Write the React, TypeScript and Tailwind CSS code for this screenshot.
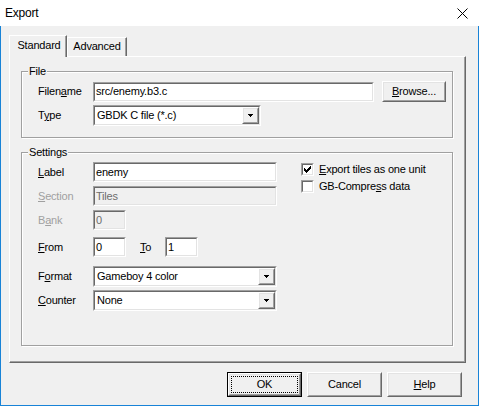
import type { ReactNode } from "react";

// Classic Win32 3D edges
const SUNKEN_OUT = "border border-t-[#a0a0a0] border-l-[#a0a0a0] border-b-white border-r-white";
const SUNKEN_IN = "border border-t-[#696969] border-l-[#696969] border-b-[#e3e3e3] border-r-[#e3e3e3]";
const RAISED_OUT = "border border-t-white border-l-white border-b-[#696969] border-r-[#696969]";
const RAISED_IN = "border border-t-[#e3e3e3] border-l-[#e3e3e3] border-b-[#a0a0a0] border-r-[#a0a0a0]";

function Edit({ value, width, disabled }: { value: string; width: string; disabled?: boolean }) {
  return (
    <div className={`${SUNKEN_OUT} ${width} h-[20px]`}>
      <div
        className={`${SUNKEN_IN} h-full flex items-center pl-[1px] ${
          disabled ? "bg-[#f0f0f0] text-[#6d6d6d]" : "bg-white"
        }`}
      >
        {value}
      </div>
    </div>
  );
}

function Arrow() {
  return (
    <svg width="5" height="3" viewBox="0 0 5 3" shapeRendering="crispEdges">
      <rect x="0" y="0" width="5" height="1" fill="#000" />
      <rect x="1" y="1" width="3" height="1" fill="#000" />
      <rect x="2" y="2" width="1" height="1" fill="#000" />
    </svg>
  );
}

function Combo({ value, width }: { value: string; width: string }) {
  return (
    <div className={`${SUNKEN_OUT} ${width} h-[21px]`}>
      <div className={`${SUNKEN_IN} h-full flex items-stretch bg-white`}>
        <div className="flex-1 flex items-center pl-[2px]">{value}</div>
        <div className={`${RAISED_OUT} w-[17px] bg-[#f0f0f0]`}>
          <div className={`${RAISED_IN} h-full flex items-center justify-center`}>
            <Arrow />
          </div>
        </div>
      </div>
    </div>
  );
}

function Button({ children, width, isDefault }: { children: ReactNode; width: string; isDefault?: boolean }) {
  const face = (
    <div className={`${RAISED_OUT} h-full bg-[#f0f0f0]`}>
      <div className={`${RAISED_IN} h-full flex items-center justify-center p-[1px]`}>
        {isDefault ? (
          <div className="w-full h-full border border-dotted border-black flex items-center justify-center">
            {children}
          </div>
        ) : (
          children
        )}
      </div>
    </div>
  );
  return isDefault ? (
    <div className={`${width} h-full border border-black`}>{face}</div>
  ) : (
    <div className={`${width} h-full`}>{face}</div>
  );
}

function CheckMark() {
  // classic 7x7 tick, one column at a time
  const tops = [2, 3, 4, 3, 2, 1, 0];
  return (
    <svg width="7" height="7" viewBox="0 0 7 7" shapeRendering="crispEdges">
      {tops.map((y, x) => (
        <rect key={x} x={x} y={y} width="1" height="3" fill="#000" />
      ))}
    </svg>
  );
}

function Checkbox({ checked, children }: { checked?: boolean; children: ReactNode }) {
  return (
    <div className="flex items-center h-[13px]">
      <div className={`${SUNKEN_OUT} w-[13px] h-[13px]`}>
        <div className={`${SUNKEN_IN} h-full bg-white flex items-center justify-center`}>
          {checked && <CheckMark />}
        </div>
      </div>
      <span className="ml-[5px]">{children}</span>
    </div>
  );
}

function Group({ title, className, children }: { title: string; className: string; children: ReactNode }) {
  return (
    <div
      className={`relative border border-[#a0a0a0] shadow-[inset_1px_1px_0_#ffffff,1px_1px_0_#ffffff] ${className}`}
    >
      <span className="absolute left-[6px] top-[-8px] px-[1px] bg-[#f0f0f0] leading-[14px]">{title}</span>
      {children}
    </div>
  );
}

function Label({ children, width = "w-[55px]", disabled }: { children: ReactNode; width?: string; disabled?: boolean }) {
  return <span className={`${width} shrink-0 ${disabled ? "text-[#a0a0a0]" : ""}`}>{children}</span>;
}

export default function App() {
  return (
    <div className="w-[479px] h-[406px] flex flex-col bg-white text-black text-[11px] tracking-[-0.2px] font-['Liberation_Sans',Arial,sans-serif] overflow-hidden select-none">
      {/* title bar */}
      <div className="h-[26px] shrink-0 flex items-center justify-between pl-[5px] pr-[11px]">
        <span className="text-[12px] tracking-[-0.2px]">Export</span>
        <svg width="11" height="11" viewBox="0 0 11 11">
          <path d="M0.5 0.5 L10.5 10.5 M10.5 0.5 L0.5 10.5" stroke="#000" strokeWidth="1" />
        </svg>
      </div>

      <div className="flex-1 flex flex-col bg-[#f0f0f0] border-x border-b border-[#1883d7]">
        {/* tabs */}
        <div className="h-[30px] pt-[9px] pl-[8px] flex items-end shrink-0">
          <div className="relative z-10 w-[58px] h-[22px] -mb-px bg-[#f0f0f0] border-l border-t border-r border-l-white border-t-white border-r-[#696969] shadow-[inset_-1px_0_0_#a0a0a0] flex items-start justify-center pt-[1px] pl-[2px]">
            Standard
          </div>
          <div className="w-[60px] h-[19px] border-l border-t border-r border-l-white border-t-white border-r-[#696969] shadow-[inset_-1px_0_0_#a0a0a0] flex items-start justify-center pt-[0px]">
            Advanced
          </div>
        </div>

        {/* tab page */}
        <div className="ml-[8px] w-[457px] h-[307px] shrink-0 border border-t-white border-l-white border-b-[#696969] border-r-[#696969] shadow-[inset_-1px_-1px_0_#a0a0a0] pt-[14px] pl-[11px]">
          <Group title="File" className="w-[432px] h-[67px] pt-[9px] pl-[16px]">
            <div className="h-[21px] flex items-center">
              <Label>
                Filen<u>a</u>me
              </Label>
              <Edit value="src/enemy.b3.c" width="w-[281px]" />
              <div className="ml-[8px] h-[21px]">
                <Button width="w-[64px]">
                  <span>
                    <u>B</u>rowse...
                  </span>
                </Button>
              </div>
            </div>
            <div className="h-[21px] mt-[3px] flex items-center">
              <Label>
                T<u>y</u>pe
              </Label>
              <Combo value="GBDK C file (*.c)" width="w-[168px]" />
            </div>
          </Group>

          <Group title="Settings" className="mt-[14px] w-[432px] h-[194px] pl-[16px] flex">
            <div className="pt-[9px] flex flex-col">
              <div className="h-[20px] flex items-center">
                <Label>
                  <u>L</u>abel
                </Label>
                <Edit value="enemy" width="w-[184px]" />
              </div>
              <div className="h-[20px] mt-[4px] flex items-center">
                <Label disabled>
                  <u>S</u>ection
                </Label>
                <Edit value="Tiles" width="w-[184px]" disabled />
              </div>
              <div className="h-[20px] mt-[4px] flex items-center">
                <Label disabled>
                  B<u>a</u>nk
                </Label>
                <Edit value="0" width="w-[33px]" disabled />
              </div>
              <div className="h-[20px] mt-[7px] flex items-center">
                <Label>
                  <u>F</u>rom
                </Label>
                <Edit value="0" width="w-[33px]" />
                <span className="ml-[14px] w-[25px]">
                  <u>T</u>o
                </span>
                <Edit value="1" width="w-[33px]" />
              </div>
              <div className="h-[21px] mt-[9px] flex items-center">
                <Label>
                  F<u>o</u>rmat
                </Label>
                <Combo value="Gameboy 4 color" width="w-[184px]" />
              </div>
              <div className="h-[21px] mt-[3px] flex items-center">
                <Label>
                  <u>C</u>ounter
                </Label>
                <Combo value="None" width="w-[184px]" />
              </div>
            </div>

            <div className="ml-[24px] pt-[10px] flex flex-col gap-[4px]">
              <Checkbox checked>
                <u>E</u>xport tiles as one unit
              </Checkbox>
              <Checkbox>
                GB-Compre<u>s</u>s data
              </Checkbox>
            </div>
          </Group>
        </div>

        {/* dialog buttons */}
        <div className="mt-[9px] h-[25px] pr-[16px] flex justify-end gap-[5px] shrink-0">
          <Button width="w-[75px]" isDefault>
            OK
          </Button>
          <Button width="w-[75px]">Cancel</Button>
          <Button width="w-[75px]">
            <span>
              <u>H</u>elp
            </span>
          </Button>
        </div>
      </div>
    </div>
  );
}
